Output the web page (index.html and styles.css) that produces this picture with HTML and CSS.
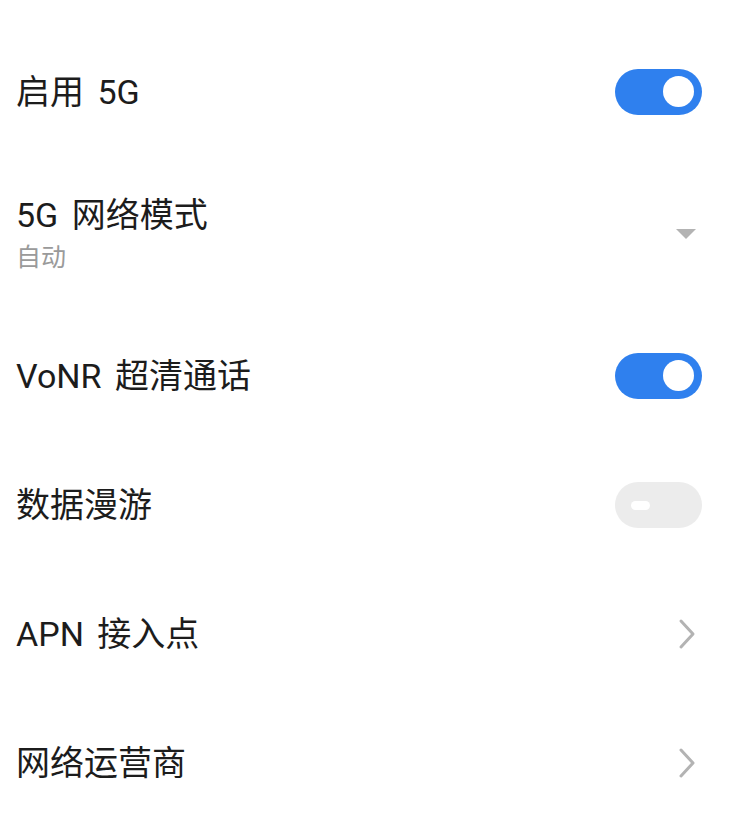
FILE: index.html
```html
<!DOCTYPE html>
<html lang="zh-CN">

<head>
    <meta charset="UTF-8">
    <meta name="viewport" content="width=device-width, initial-scale=1.0">
    <title>移动网络</title>
    <link rel="stylesheet" href="styles.css">
</head>

<body>
    <div class="list">
        <div class="row">
            <div class="label">
                <span class="title">启用 5G</span>
            </div>
            <div class="switch on"><span class="knob"></span></div>
        </div>

        <div class="row tall">
            <div class="label">
                <span class="title">5G 网络模式</span>
                <span class="sub">自动</span>
            </div>
            <svg class="arrow-down" width="22" height="12" viewBox="0 0 22 12">
                <path d="M1 1 L21 1 L11 11 Z" fill="#b3b3b3" />
            </svg>
        </div>

        <div class="row">
            <div class="label">
                <span class="title">VoNR 超清通话</span>
            </div>
            <div class="switch on"><span class="knob"></span></div>
        </div>

        <div class="row">
            <div class="label">
                <span class="title">数据漫游</span>
            </div>
            <div class="switch off"><span class="knob"></span></div>
        </div>

        <div class="row">
            <div class="label">
                <span class="title">APN 接入点</span>
            </div>
            <svg class="chevron" width="18" height="32" viewBox="0 0 18 32">
                <path d="M3 3 L15 16 L3 29" fill="none" stroke="#b3b3b3" stroke-width="3" stroke-linecap="round" stroke-linejoin="round" />
            </svg>
        </div>

        <div class="row">
            <div class="label">
                <span class="title">网络运营商</span>
            </div>
            <svg class="chevron" width="18" height="32" viewBox="0 0 18 32">
                <path d="M3 3 L15 16 L3 29" fill="none" stroke="#b3b3b3" stroke-width="3" stroke-linecap="round" stroke-linejoin="round" />
            </svg>
        </div>
    </div>
</body>

</html>
```

FILE: styles.css
```css
* {
    padding: 0;
    margin: 0;
    box-sizing: border-box;
}

body {
    background: #ffffff;
    font-family: Roboto, "Noto Sans CJK SC", sans-serif;
    color: #1c1c1c;
}

.list {
    padding-top: 27px;
}

.row {
    display: flex;
    align-items: center;
    justify-content: space-between;
    height: 129px;
    padding: 0 28px 0 16px;
}

.row.tall {
    height: 155px;
}

.label {
    display: flex;
    flex-direction: column;
}

.title {
    font-size: 34px;
    line-height: 44px;
    word-spacing: 5px;
}

.sub {
    font-size: 25px;
    line-height: 32px;
    color: #9a9a9a;
    margin-top: 5px;
}

.switch {
    position: relative;
    width: 87px;
    height: 46px;
    border-radius: 23px;
}

.switch.on {
    background: #2f80ee;
}

.switch.on .knob {
    position: absolute;
    right: 8px;
    top: 7.5px;
    width: 31px;
    height: 31px;
    border-radius: 50%;
    background: #ffffff;
}

.switch.off {
    background: #ececec;
}

.switch.off .knob {
    position: absolute;
    left: 16px;
    top: 19px;
    width: 19px;
    height: 9px;
    border-radius: 5px;
    background: #ffffff;
}

.arrow-down {
    margin-right: 5px;
}

.chevron {
    margin-right: 6px;
}
```
